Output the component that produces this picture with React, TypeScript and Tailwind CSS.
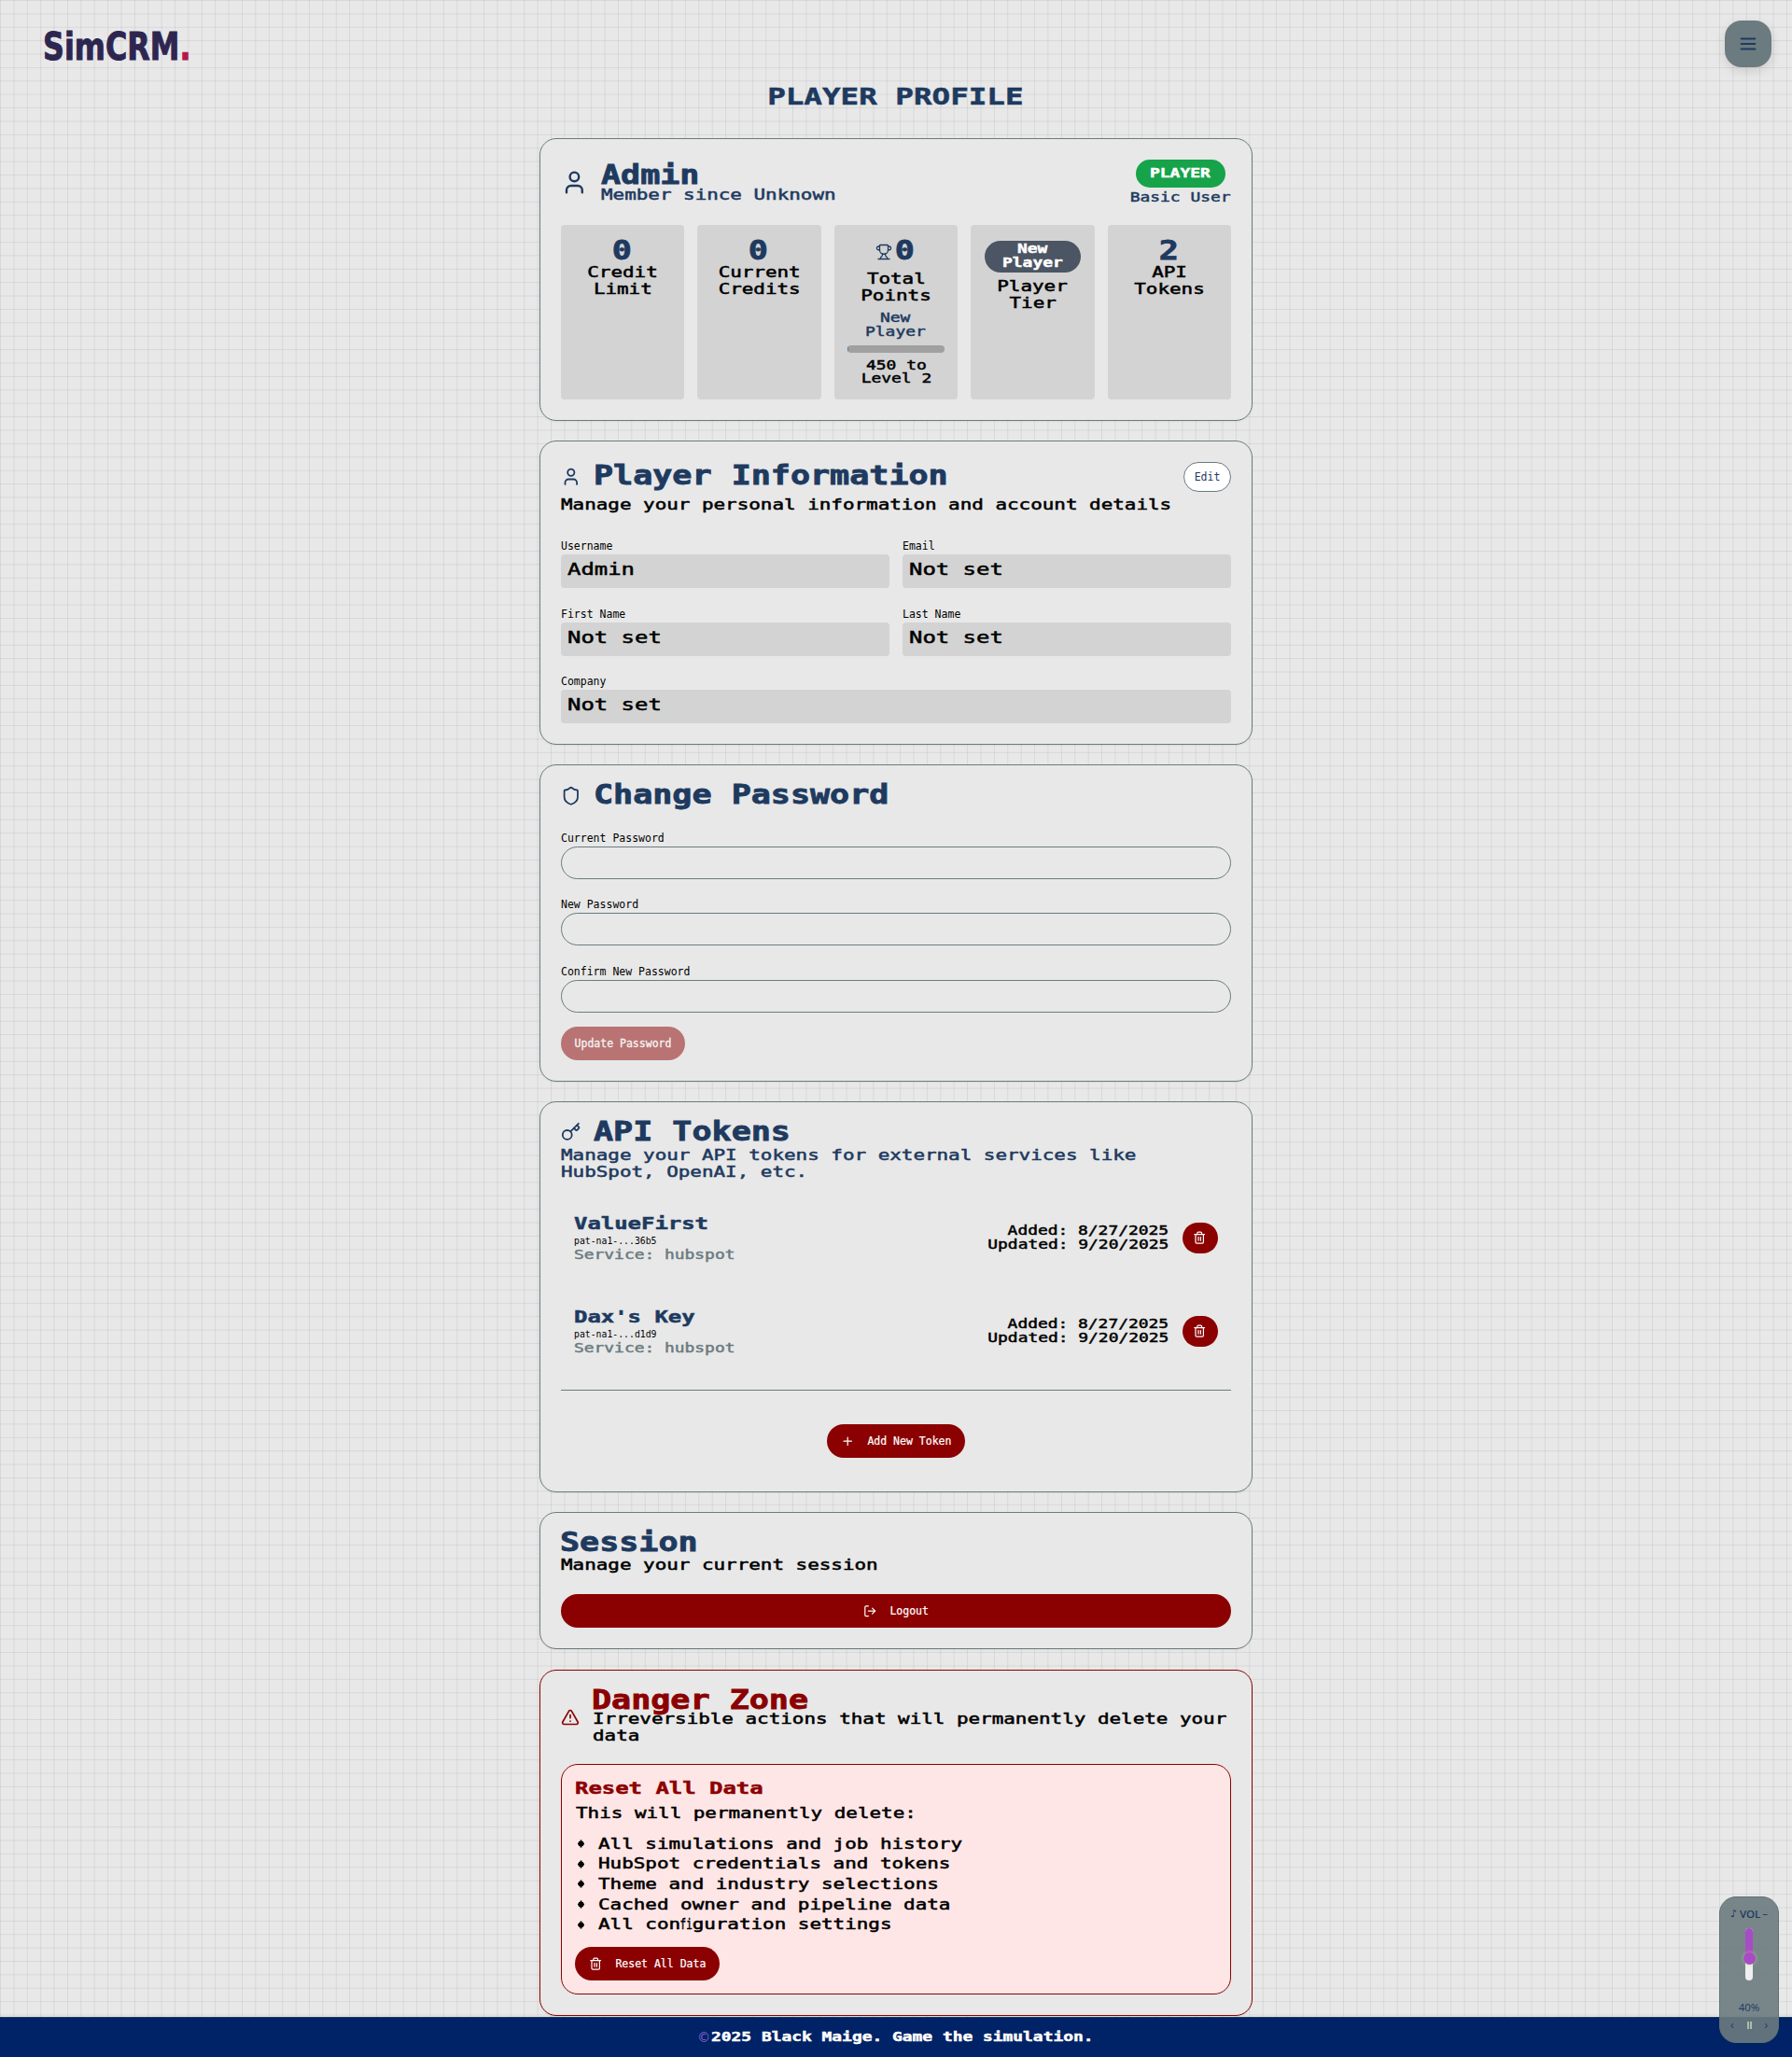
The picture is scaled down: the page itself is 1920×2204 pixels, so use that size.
import React from "react";
import { User, Trophy, Shield, Key, Trash2, Plus, LogOut, AlertTriangle } from "lucide-react";

type Size = "sm" | "md" | "lg" | "xl" | "title";
type Align = "left" | "center" | "right";

const sizes: Record<Size, string> = {
  sm: "text-[13.5px] scale-x-[1.326] [-webkit-text-stroke:0.45px]",
  md: "text-[15.5px] scale-x-[1.348] [-webkit-text-stroke:0.5px]",
  lg: "text-[18px] scale-x-[1.329] [-webkit-text-stroke:0.5px]",
  xl: "text-[27.5px] scale-x-[1.274] font-bold [-webkit-text-stroke:0.8px]",
  title: "text-[25px] scale-x-[1.302] font-bold [-webkit-text-stroke:0.5px]",
};

const origins: Record<Align, string> = {
  left: "origin-left",
  center: "origin-center",
  right: "origin-right",
};

/** One line of wide display lettering. */
function Wide({ size, align = "left", className = "", children }: { size: Size; align?: Align; className?: string; children: React.ReactNode }) {
  return (
    <span className={`block w-max whitespace-pre ${sizes[size]} ${origins[align]} ${className}`}>{children}</span>
  );
}

function Card({ className = "", children }: { className?: string; children: React.ReactNode }) {
  return (
    <section className={`flex w-[764px] flex-col rounded-[18px] border bg-[#e8e8e8] px-[22px] pt-[22px] shadow-[0_1px_2px_rgba(0,0,0,0.06)] ${className}`}>
      {children}
    </section>
  );
}

function Stat({ children }: { children: React.ReactNode }) {
  return <div className="flex flex-col items-center rounded bg-[#d3d3d3] pt-[14px] text-black">{children}</div>;
}

function StatNumber({ children }: { children: React.ReactNode }) {
  return (
    <div className="h-[28px] pr-[2px] text-[#1e3a5f]">
      <Wide size="xl" align="center" className="leading-[27px]">{children}</Wide>
    </div>
  );
}

function Field({ label, value }: { label: string; value: string }) {
  return (
    <div>
      <div className="h-[17px] text-[11.5px] leading-[17px] text-black">{label}</div>
      <div className="h-[36px] rounded bg-[#d3d3d3] pl-[7px] text-black">
        <Wide size="lg" className="leading-[32px]">{value}</Wide>
      </div>
    </div>
  );
}

function PasswordField({ label, className = "" }: { label: string; className?: string }) {
  return (
    <div className={className}>
      <div className="h-[17px] text-[11.5px] leading-[17px] text-black">{label}</div>
      <input type="password" className="block h-[35px] w-full rounded-[18px] border border-[#6b7b7f] bg-transparent px-3" />
    </div>
  );
}

function Token({ name, mask }: { name: string; mask: string }) {
  return (
    <div className="flex h-[100px] items-start justify-between px-[14px]">
      <div>
        <Wide size="lg" className="h-[20px] font-bold leading-[20px] text-[#1e3a5f]">{name}</Wide>
        <div className="h-[16px] text-[9.8px] leading-[17px] text-black">{mask}</div>
        <Wide size="sm" className="leading-[15px] text-[#6b7b7f]">Service: hubspot</Wide>
      </div>
      <div className="flex items-center gap-[15px] pt-[9px]">
        <div className="-mt-px flex flex-col items-end text-black">
          <Wide size="sm" align="right" className="leading-[15px]">Added: 8/27/2025</Wide>
          <Wide size="sm" align="right" className="leading-[15px]">Updated: 9/20/2025</Wide>
        </div>
        <button className="flex h-[33px] w-[38px] items-center justify-center rounded-[18px] bg-[#8b0000] pr-px text-white">
          <Trash2 size={14.4} strokeWidth={2} />
        </button>
      </div>
    </div>
  );
}

const removed: React.ReactNode[] = [
  "All simulations and job history",
  "HubSpot credentials and tokens",
  "Theme and industry selections",
  "Cached owner and pipeline data",
  <>
    All con<span className="inline-block w-[9.33px] origin-left scale-x-[0.52]">fi</span>guration settings
  </>,
];

export default function App() {
  return (
    <div className="relative flex h-[2204px] w-[1920px] flex-col items-center bg-[#e8e8e8] bg-[linear-gradient(rgba(0,0,0,0.07)_1px,transparent_1px),linear-gradient(90deg,rgba(0,0,0,0.07)_1px,transparent_1px)] bg-[size:14.4px_14.4px] font-['DejaVu_Sans_Mono',monospace]">
      <header className="flex h-[84px] w-full items-start justify-between pl-[46px] pr-[22px] pt-[22px]">
        <div className="mt-[4px] flex h-[48px] w-max origin-left scale-x-[0.795] items-center font-['DejaVu_Sans',sans-serif] text-[40px] font-bold leading-[48px] text-[#2d2650] [-webkit-text-stroke:1px]">
          SimCRM<span className="text-[#b3174a]">.</span>
        </div>
        <button className="flex h-[50px] w-[50px] items-center justify-center rounded-[18px] bg-[#6b7b7f] text-[#1e3a5f] shadow-[0_4px_12px_rgba(0,0,0,0.12)]">
          <svg viewBox="0 0 24 24" className="h-[22px] w-[22px]" fill="none" stroke="currentColor" strokeWidth="2.2" strokeLinecap="round">
            <path d="M4 6h16M4 12h16M4 18h16" />
          </svg>
        </button>
      </header>

      <h1 className="h-[64px] pr-[2px] text-[#1e3a5f]">
        <Wide size="title" align="center" className="leading-[40px]">PLAYER PROFILE</Wide>
      </h1>

      <main className="flex flex-col gap-[21px]">
        <Card className="h-[303px] border-[#6b7b7f]">
          <div className="flex h-[70px] items-start justify-between text-[#1e3a5f]">
            <div className="flex h-[48px] items-center gap-[14px]">
              <User size={28.8} strokeWidth={2} />
              <div>
                <Wide size="xl" className="h-[28px] leading-[29px]">Admin</Wide>
                <Wide size="md" className="leading-[17px]">Member since Unknown</Wide>
              </div>
            </div>
            <div className="flex w-[109px] flex-col items-center">
              <div className="flex h-[30px] w-[96px] items-start justify-center rounded-[18px] bg-[#16a34a] text-white">
                <Wide size="sm" align="center" className="font-bold leading-[28px]">PLAYER</Wide>
              </div>
              <Wide size="sm" align="center" className="mt-[2px] leading-[16px]">Basic User</Wide>
            </div>
          </div>
          <div className="grid h-[187px] grid-cols-5 gap-[14.4px]">
            <Stat>
              <StatNumber>0</StatNumber>
              <Wide size="md" align="center" className="leading-[18px]">Credit</Wide>
              <Wide size="md" align="center" className="leading-[18px]">Limit</Wide>
            </Stat>
            <Stat>
              <StatNumber>0</StatNumber>
              <Wide size="md" align="center" className="leading-[18px]">Current</Wide>
              <Wide size="md" align="center" className="leading-[18px]">Credits</Wide>
            </Stat>
            <Stat>
              <div className="flex h-[35px] items-start gap-[5px] pr-[5px] text-[#1e3a5f]">
                <Trophy size={18} strokeWidth={1.7} className="mt-[6px]" />
                <Wide size="xl" align="center" className="leading-[27px]">0</Wide>
              </div>
              <Wide size="md" align="center" className="leading-[18px]">Total</Wide>
              <Wide size="md" align="center" className="leading-[18px]">Points</Wide>
              <div className="flex flex-col items-center pr-px pt-[7px] text-[#1e3a5f]">
                <Wide size="sm" align="center" className="leading-[15px]">New</Wide>
                <Wide size="sm" align="center" className="leading-[15px]">Player</Wide>
              </div>
              <div className="mb-[6px] mt-[7px] h-[8px] w-[104px] overflow-hidden rounded-full bg-[#a0a0a0]">
                <div className="h-full w-px bg-[#3b82c4]" />
              </div>
              <Wide size="sm" align="center" className="leading-[14.4px]">450 to</Wide>
              <Wide size="sm" align="center" className="leading-[14.4px]">Level 2</Wide>
            </Stat>
            <Stat>
              <div className="mb-[6px] mt-[3px] flex h-[34px] w-[103px] flex-col items-center rounded-[18px] bg-[#4b5563] pr-px pt-px font-bold text-white">
                <Wide size="sm" align="center" className="leading-[15px]">New</Wide>
                <Wide size="sm" align="center" className="leading-[15px]">Player</Wide>
              </div>
              <Wide size="md" align="center" className="leading-[18px]">Player</Wide>
              <Wide size="md" align="center" className="leading-[18px]">Tier</Wide>
            </Stat>
            <Stat>
              <StatNumber>2</StatNumber>
              <Wide size="md" align="center" className="leading-[18px]">API</Wide>
              <Wide size="md" align="center" className="leading-[18px]">Tokens</Wide>
            </Stat>
          </div>
        </Card>

        <Card className="h-[326px] border-[#6b7b7f]">
          <div className="flex h-[37px] items-start justify-between text-[#1e3a5f]">
            <div className="flex gap-[13px]">
              <User size={21.6} strokeWidth={2} className="mt-[5px]" />
              <Wide size="xl" className="leading-[29px]">Player Information</Wide>
            </div>
            <button className="h-[32px] w-[51px] rounded-[18px] border border-[#6b7b7f] bg-white pt-px text-[11.5px]">Edit</button>
          </div>
          <Wide size="md" className="h-[45px] leading-[18px] text-black">Manage your personal information and account details</Wide>
          <div className="grid grid-cols-2 gap-x-[14px] gap-y-[20px]">
            <Field label="Username" value="Admin" />
            <Field label="Email" value="Not set" />
            <Field label="First Name" value="Not set" />
            <Field label="Last Name" value="Not set" />
            <div className="col-span-2 -mt-px">
              <Field label="Company" value="Not set" />
            </div>
          </div>
        </Card>

        <Card className="h-[340px] border-[#6b7b7f]">
          <div className="flex h-[48px] gap-[13px] text-[#1e3a5f]">
            <Shield size={21.6} strokeWidth={2} />
            <Wide size="xl" className="-mt-[5px] h-[29px] leading-[29px]">Change Password</Wide>
          </div>
          <PasswordField label="Current Password" />
          <PasswordField label="New Password" className="mt-[19px]" />
          <PasswordField label="Confirm New Password" className="mt-[20px]" />
          <button className="mt-[15px] h-[36px] w-[133px] rounded-[18px] bg-[#8b0000] pt-px text-[11.5px] text-white opacity-50 [-webkit-text-stroke:0.3px]">
            Update Password
          </button>
        </Card>

        <Card className="h-[419px] border-[#6b7b7f]">
          <div className="flex h-[26px] gap-[13px] text-[#1e3a5f]">
            <Key size={21.6} strokeWidth={2} className="-mt-px" />
            <Wide size="xl" className="-mt-[5px] h-[29px] leading-[29px]">API Tokens</Wide>
          </div>
          <Wide size="md" className="leading-[18px] text-[#1e3a5f]">Manage your API tokens for external services like</Wide>
          <Wide size="md" className="mb-[36px] leading-[18px] text-[#1e3a5f]">HubSpot, OpenAI, etc.</Wide>
          <Token name="ValueFirst" mask="pat-na1-...36b5" />
          <Token name="Dax's Key" mask="pat-na1-...d1d9" />
          <div className="-mt-[12px] flex justify-center border-t border-[#6b7b7f] pt-[36px]">
            <button className="flex h-[36px] w-[148px] items-center gap-[14px] rounded-[18px] bg-[#8b0000] pl-[15px] text-[11.5px] text-white [-webkit-text-stroke:0.2px]">
              <Plus size={14.4} strokeWidth={2} />
              <span className="pt-px">Add New Token</span>
            </button>
          </div>
        </Card>

        <Card className="h-[147px] border-[#6b7b7f]">
          <Wide size="xl" className="-mt-[5px] -ml-px leading-[29px] text-[#1e3a5f]">Session</Wide>
          <Wide size="md" className="mb-[22px] mt-px leading-[18px] text-black">Manage your current session</Wide>
          <button className="flex h-[36px] shrink-0 items-center justify-center gap-[14px] rounded-[18px] bg-[#8b0000] text-[11.5px] text-white [-webkit-text-stroke:0.2px]">
            <LogOut size={14.4} strokeWidth={2} />
            <span className="pt-px">Logout</span>
          </button>
        </Card>

        <Card className="mt-px h-[371px] border-[#8b0000]">
          <div className="flex h-[78px] shrink-0 gap-[13px] text-[#8b0000]">
            <AlertTriangle size={20} strokeWidth={2} className="mt-[18px]" />
            <div className="-mt-[5px]">
              <Wide size="xl" className="h-[26px] leading-[28px]">Danger Zone</Wide>
              <Wide size="md" className="ml-px leading-[18px] text-black">Irreversible actions that will permanently delete your</Wide>
              <Wide size="md" className="ml-px leading-[18px] text-black">data</Wide>
            </div>
          </div>
          <div className="h-[247px] shrink-0 rounded-[18px] border border-[#8b0000] bg-[#ffe6e6] px-[14px] pt-[14px]">
            <Wide size="lg" className="h-[28px] font-bold leading-[21px] text-[#8b0000]">Reset All Data</Wide>
            <Wide size="md" className="ml-px h-[32px] leading-[20px] text-black">This will permanently delete:</Wide>
            <ul className="text-black">
              {removed.map((line, index) => (
                <li key={index} className="flex h-[21.6px] items-center">
                  <span className="flex w-[25px] pl-[3px]">
                    <svg viewBox="0 0 7 9" className="h-[9px] w-[7px]" fill="currentColor">
                      <path d="M2.5 0.5h2v1.500h1.500v1.500h1v2h-1v1.500h-1.500v1.500h-2v-1.500h-1.500v-1.500h-1v-2h1v-1.500h1.500Z" />
                    </svg>
                  </span>
                  <Wide size="md" className="leading-[20px] [font-variant-ligatures:none]">{line}</Wide>
                </li>
              ))}
            </ul>
            <button className="mt-[13px] flex h-[36px] w-[155px] items-center gap-[14px] rounded-[18px] bg-[#8b0000] pl-[15px] text-[11.5px] text-white [-webkit-text-stroke:0.2px]">
              <Trash2 size={14.4} strokeWidth={2} />
              <span className="pt-px">Reset All Data</span>
            </button>
          </div>
        </Card>
      </main>

      <footer className="mt-px flex h-[43px] w-full items-start justify-center border-t border-[#1e3a5f] bg-[#002266] text-white">
        <div className="flex w-[424px] pl-px">
          <span className="w-[13px] text-[17px] leading-[43px] text-[#7b5cc4]">©</span>
          <Wide size="sm" className="font-bold leading-[40px]">2025 Black Maige. Game the simulation.</Wide>
        </div>
      </footer>

      <aside className="absolute left-[1842px] top-[2032px] flex h-[157px] w-[64px] flex-col items-center rounded-[18px] border border-[#5f7174] bg-[#6b7b7f]/90 font-['Open_Sans',sans-serif] text-[#1e3a5f]">
        <div className="mt-[9px] flex h-[18px] items-center text-[11.5px] font-semibold leading-[18px]">
          <span className="w-[10px] font-['DejaVu_Sans',sans-serif] text-[11px] font-normal">♪</span>VOL<span className="ml-[2px] text-[10px]">−</span>
        </div>
        <div className="mt-[6px] flex h-[56px] w-[8px] flex-col items-center rounded-full bg-[#f0eef0]">
          <div className="h-[32px] w-full shrink-0 rounded-t-full bg-[#a84bc4]" />
          <div className="-mt-[6px] h-[13px] w-[13px] shrink-0 rounded-full bg-[#a84bc4] shadow-[0_0_4px_rgba(190,210,140,0.7)]" />
        </div>
        <div className="mt-[20px] text-[11.5px] leading-[18px]">40%</div>
        <div className="mt-[2px] flex w-[40px] items-center justify-between text-[12px] leading-[16px]">
          <span>‹</span>
          <span className="flex gap-px">
            <span className="h-[8px] w-[2px] bg-[#a9c0a6]" />
            <span className="h-[8px] w-[2px] bg-[#a9c0a6]" />
          </span>
          <span>›</span>
        </div>
      </aside>
    </div>
  );
}
